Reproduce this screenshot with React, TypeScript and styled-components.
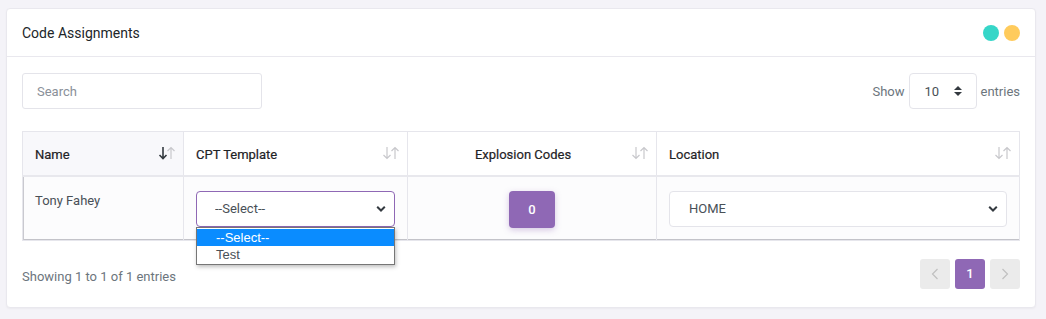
import React from "react";
import styled, { createGlobalStyle } from "styled-components";

const GlobalStyle = createGlobalStyle`
  body {
    margin: 0;
    background: #f4f3f8;
    font-family: Roboto, "Liberation Sans", Arial, sans-serif;
    color: #333;
  }
  * { box-sizing: border-box; }
`;

const Page = styled.div`
  padding: 8px 10px 12px 6px;
`;

const Card = styled.div`
  background: #fff;
  border: 1px solid #e9e8ee;
  border-radius: 4px;
  box-shadow: 0 1px 2px rgba(0, 0, 0, 0.04);
`;

const CardHeader = styled.div`
  height: 48px;
  display: flex;
  align-items: center;
  justify-content: space-between;
  padding: 0 15px;
  border-bottom: 1px solid #e9e8ee;
`;

const Title = styled.div`
  font-size: 14px;
  font-weight: 400;
  color: #212529;
  padding-top: 1px;
`;

const Dots = styled.div`
  display: flex;
  gap: 5px;
`;

const Dot = styled.span<{ $color: string }>`
  width: 16px;
  height: 16px;
  border-radius: 50%;
  background: ${(p) => p.$color};
`;

const CardBody = styled.div`
  padding: 16px 15px 18px 15px;
`;

const Toolbar = styled.div`
  display: flex;
  justify-content: space-between;
  align-items: center;
`;

const SearchInput = styled.input`
  width: 240px;
  height: 36px;
  border: 1px solid #e4e4ea;
  border-radius: 3px;
  padding: 0 14px;
  font-family: inherit;
  font-size: 13px;
  color: #495057;
  outline: none;
  &::placeholder {
    color: #8a9099;
  }
`;

const ShowLabel = styled.label`
  display: flex;
  align-items: center;
  gap: 4px;
  font-size: 13px;
  color: #6c757d;
`;

const SelectWrap = styled.div<{ $width: string }>`
  position: relative;
  width: ${(p) => p.$width};
`;

const Select = styled.select<{ $focus?: boolean; $pad?: number }>`
  width: 100%;
  height: 36px;
  appearance: none;
  background: #fff;
  border: 1px solid ${(p) => (p.$focus ? "#8f68b5" : "#e4e4ea")};
  border-radius: 4px;
  padding: 0 30px 0 ${(p) => p.$pad ?? 18}px;
  font-family: inherit;
  font-size: 13px;
  color: #495057;
  outline: none;
`;

const Caret = styled.svg`
  position: absolute;
  top: 50%;
  right: 9px;
  transform: translateY(-50%);
  pointer-events: none;
`;

const Table = styled.table`
  width: 100%;
  margin-top: 22px;
  border-collapse: collapse;
  border: 1px solid #e6e6ec;
  font-size: 13px;
`;

const HeadCell = styled.th<{ $active?: boolean; $center?: boolean; $w: string }>`
  position: relative;
  width: ${(p) => p.$w};
  height: 44px;
  padding: 2px 30px 0 12px;
  text-align: ${(p) => (p.$center ? "center" : "left")};
  font-weight: 400;
  color: #1f2326;
  -webkit-text-stroke: 0.2px #1f2326;
  background: ${(p) => (p.$active ? "#f8f8fb" : "#fff")};
  border-left: 1px solid #e6e6ec;
  border-bottom: 2px solid #e8e8ed;
`;

const SortIcon = styled.svg`
  position: absolute;
  right: 7px;
  top: 50%;
  transform: translateY(-50%);
`;

const BodyRow = styled.tr`
  background: #fcfcfd;
  box-shadow: inset 1px 0 0 #c9c9cf, inset 0 -1px 0 #c3c3c9, inset -1px 0 0 #d8d8dd;
`;

const Cell = styled.td<{ $center?: boolean }>`
  height: 63px;
  padding: 14px 12px 12px 12px;
  vertical-align: top;
  text-align: ${(p) => (p.$center ? "center" : "left")};
  color: #495057;
  border-left: 1px solid #e6e6ec;
  &:first-child {
    border-left: none;
  }
`;

const NameText = styled.div`
  padding-top: 2px;
`;

const CountButton = styled.button`
  width: 46px;
  height: 37px;
  border: none;
  border-radius: 4px;
  background: #8f68b5;
  color: #fff;
  font-family: inherit;
  font-size: 13px;
  font-weight: 500;
  box-shadow: 0 2px 6px rgba(143, 104, 181, 0.35);
`;

const Popup = styled.ul`
  position: absolute;
  top: 36px;
  left: 0;
  width: 100%;
  margin: 0;
  padding: 1px 0;
  list-style: none;
  background: #fff;
  border: 1px solid #767676;
  box-shadow: 1px 2px 4px rgba(0, 0, 0, 0.25);
  font-family: "Liberation Sans", Arial, sans-serif;
  font-size: 13px;
  z-index: 5;
`;

const PopupItem = styled.li<{ $selected?: boolean }>`
  height: 17px;
  line-height: 17px;
  padding-left: 19px;
  background: ${(p) => (p.$selected ? "#0a8cff" : "transparent")};
  color: ${(p) => (p.$selected ? "#fff" : "#495057")};
`;

const Footer = styled.div`
  margin-top: 18px;
  display: flex;
  align-items: center;
  justify-content: space-between;
`;

const Info = styled.div`
  font-size: 13px;
  color: #6c757d;
  padding-top: 6px;
`;

const Pager = styled.div`
  display: flex;
  gap: 5px;
`;

const PageBtn = styled.button<{ $active?: boolean }>`
  width: 30px;
  height: 30px;
  border: none;
  border-radius: 3px;
  display: flex;
  align-items: center;
  justify-content: center;
  background: ${(p) => (p.$active ? "#8f68b5" : "#ebebeb")};
  color: ${(p) => (p.$active ? "#fff" : "#b5b5b5")};
  font-family: inherit;
  font-size: 13px;
  font-weight: 500;
  padding: 0;
`;

const Chevron = () => (
  <Caret width="10" height="7" viewBox="0 0 10 7">
    <path d="M1.2 1.3 L5 5 L8.8 1.3" fill="none" stroke="#343a40" strokeWidth="2" />
  </Caret>
);

const UpDown = () => (
  <Caret width="10" height="12" viewBox="0 0 10 12" style={{ right: 14 }}>
    <path d="M5 1 L9 5 H1 Z M5 11 L9 7 H1 Z" fill="#343a40" />
  </Caret>
);

const Sort = ({ active }: { active?: boolean }) => (
  <SortIcon width="18" height="14" viewBox="0 0 18 14">
    <path
      d="M5 1 V12.5 M1.5 9 L5 12.5 L8.5 9"
      fill="none"
      stroke={active ? "#343a40" : "#c8c8cc"}
      strokeWidth={active ? 1.6 : 1.2}
    />
    <path d="M13 13 V1.5 M9.5 5 L13 1.5 L16.5 5" fill="none" stroke="#c8c8cc" strokeWidth="1.2" />
  </SortIcon>
);

export default function App() {
  return (
    <>
      <GlobalStyle />
      <Page>
        <Card>
          <CardHeader>
            <Title>Code Assignments</Title>
            <Dots>
              <Dot $color="#36d6c8" />
              <Dot $color="#ffcb5c" />
            </Dots>
          </CardHeader>
          <CardBody>
            <Toolbar>
              <SearchInput placeholder="Search" />
              <ShowLabel>
                Show
                <SelectWrap $width="68px">
                  <Select $pad={15} defaultValue="10">
                    <option>10</option>
                  </Select>
                  <UpDown />
                </SelectWrap>
                entries
              </ShowLabel>
            </Toolbar>
            <Table>
              <thead>
                <tr>
                  <HeadCell $w="161px" $active>
                    Name
                    <Sort active />
                  </HeadCell>
                  <HeadCell $w="224px">
                    CPT Template
                    <Sort />
                  </HeadCell>
                  <HeadCell $w="249px" $center>
                    Explosion Codes
                    <Sort />
                  </HeadCell>
                  <HeadCell $w="auto">
                    Location
                    <Sort />
                  </HeadCell>
                </tr>
              </thead>
              <tbody>
                <BodyRow>
                  <Cell>
                    <NameText>Tony Fahey</NameText>
                  </Cell>
                  <Cell>
                    <SelectWrap $width="199px">
                      <Select $focus defaultValue="">
                        <option value="">--Select--</option>
                        <option value="test">Test</option>
                      </Select>
                      <Chevron />
                      <Popup>
                        <PopupItem $selected>--Select--</PopupItem>
                        <PopupItem>Test</PopupItem>
                      </Popup>
                    </SelectWrap>
                  </Cell>
                  <Cell $center>
                    <CountButton>0</CountButton>
                  </Cell>
                  <Cell>
                    <SelectWrap $width="338px">
                      <Select $pad={19} defaultValue="HOME">
                        <option>HOME</option>
                      </Select>
                      <Chevron />
                    </SelectWrap>
                  </Cell>
                </BodyRow>
              </tbody>
            </Table>
            <Footer>
              <Info>Showing 1 to 1 of 1 entries</Info>
              <Pager>
                <PageBtn>
                  <svg width="8" height="12" viewBox="0 0 8 12">
                    <path d="M6.5 1 L1.5 6 L6.5 11" fill="none" stroke="#c0c0c0" strokeWidth="1.2" />
                  </svg>
                </PageBtn>
                <PageBtn $active>1</PageBtn>
                <PageBtn>
                  <svg width="8" height="12" viewBox="0 0 8 12">
                    <path d="M1.5 1 L6.5 6 L1.5 11" fill="none" stroke="#c0c0c0" strokeWidth="1.2" />
                  </svg>
                </PageBtn>
              </Pager>
            </Footer>
          </CardBody>
        </Card>
      </Page>
    </>
  );
}
